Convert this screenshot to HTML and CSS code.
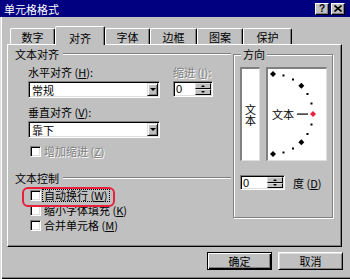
FILE: index.html
```html
<!DOCTYPE html>
<html lang="zh-CN">
<head>
    <meta charset="UTF-8">
    <title>单元格格式</title>
    <link rel="stylesheet" href="styles.css">
</head>
<body>
<div class="window">
    <div class="titlebar">
        <span class="title">单元格格式</span>
        <div class="cap-buttons">
            <span class="cap-btn">?</span>
            <span class="cap-btn">
                <svg width="8" height="7" viewBox="0 0 8 7"><path d="M0.5 0.5 L7.5 6.5 M7.5 0.5 L0.5 6.5" stroke="#000" stroke-width="1.6"/></svg>
            </span>
        </div>
    </div>

    <!-- tab strip -->
    <div class="tabs">
        <div class="tab w45">数字</div>
        <div class="tab tab-active w50">对齐</div>
        <div class="tab w45">字体</div>
        <div class="tab w47">边框</div>
        <div class="tab w46">图案</div>
        <div class="tab w49">保护</div>
    </div>

    <div class="panel">
        <div class="left">
            <div class="group-head"><span>文本对齐</span><i class="rule"></i></div>

            <div class="align-grid">
                <div class="field">
                    <label>水平对齐 (<u>H</u>):</label>
                    <div class="combo"><span class="combo-text">常规</span><span class="drop-btn"><i class="tri-down"></i></span></div>
                </div>
                <div class="field">
                    <label class="disabled">缩进 (<u>I</u>):</label>
                    <div class="spin">
                        <span class="spin-val">0</span>
                        <span class="spin-btns"><span class="spin-btn"><i class="tri-up"></i></span><span class="spin-btn"><i class="tri-down small"></i></span></span>
                    </div>
                </div>
                <div class="field">
                    <label>垂直对齐 (<u>V</u>):</label>
                    <div class="combo"><span class="combo-text">靠下</span><span class="drop-btn"><i class="tri-down"></i></span></div>
                </div>
            </div>

            <div class="check-row first-check">
                <span class="box"></span><span class="check-label disabled">增加缩进 (<u>Z</u>)</span>
            </div>

            <div class="group-head second"><span>文本控制</span><i class="rule"></i></div>

            <div class="checks">
                <div class="check-row marked">
                    <span class="box"></span><span class="check-label focused">自动换行 (<u>W</u>)</span>
                </div>
                <div class="check-row">
                    <span class="box"></span><span class="check-label">缩小字体填充 (<u>K</u>)</span>
                </div>
                <div class="check-row">
                    <span class="box"></span><span class="check-label">合并单元格 (<u>M</u>)</span>
                </div>
            </div>
        </div>

        <fieldset class="orient">
            <legend>方向</legend>
            <div class="wells">
                <div class="well vertical-text">文本</div>
                <div class="well dial">
                    <svg width="58" height="91" viewBox="0 0 58 91">
                        <g fill="#000">
                            <rect x="14.5" y="5.5" width="2" height="2"/>
                            <rect x="24" y="9.5" width="2" height="2"/>
                            <rect x="38.5" y="24" width="2" height="2"/>
                            <rect x="42.5" y="33.5" width="2" height="2"/>
                            <rect x="42.5" y="54.5" width="2" height="2"/>
                            <rect x="38.5" y="64" width="2" height="2"/>
                            <rect x="24" y="78.5" width="2" height="2"/>
                            <rect x="14.5" y="82.5" width="2" height="2"/>
                            <path d="M5 2 L8 5 L5 8 L2 5 Z"/>
                            <path d="M33.3 13.7 L36.3 16.7 L33.3 19.7 L30.3 16.7 Z"/>
                            <path d="M33.3 70.3 L36.3 73.3 L33.3 76.3 L30.3 73.3 Z"/>
                            <path d="M5 82 L8 85 L5 88 L2 85 Z"/>
                            <rect x="29" y="44.5" width="11" height="1.2"/>
                        </g>
                        <path d="M45 42 L48 45 L45 48 L42 45 Z" fill="#e8203c"/>
                        <text x="4" y="49.5" class="dial-text">文本</text>
                    </svg>
                </div>
            </div>
            <div class="degree-row">
                <div class="spin deg">
                    <span class="spin-val">0</span>
                    <span class="spin-btns"><span class="spin-btn"><i class="tri-up"></i></span><span class="spin-btn"><i class="tri-down small"></i></span></span>
                </div>
                <span class="deg-label">度 (<u>D</u>)</span>
            </div>
        </fieldset>
    </div>

    <div class="actions">
        <div class="btn btn-default">确定</div>
        <div class="btn">取消</div>
    </div>
</div>
</body>
</html>
```

FILE: styles.css
```css
* {
    box-sizing: border-box;
}
body {
    margin: 0;
    background: #c0c0c0;
    font-family: "Noto Sans CJK SC", "Liberation Sans", sans-serif;
    font-size: 11px;
    color: #000;
}
.window {
    width: 350px;
    height: 279px;
    background: #c0c0c0;
    overflow: hidden;
    box-shadow: inset 1px 0 #dfdfdf, inset 2px 0 #fff, inset 0 -1px #000, inset 0 -2px #808080;
}

/* title bar */
.titlebar {
    height: 17px;
    background: #000080;
    color: #fff;
    display: flex;
    align-items: center;
    justify-content: space-between;
    padding: 0 5px 0 4px;
}
.title {
    line-height: 12px;
}
.cap-buttons {
    display: flex;
    gap: 2px;
}
.cap-btn {
    width: 14px;
    height: 12px;
    background: #c0c0c0;
    border: 1px solid;
    border-color: #fff #000 #000 #fff;
    box-shadow: inset -1px -1px #808080;
    display: flex;
    align-items: center;
    justify-content: center;
    color: #000;
    font: bold 10px "Liberation Sans", sans-serif;
}

/* tabs */
.tabs {
    display: flex;
    align-items: flex-end;
    height: 18px;
    margin-top: 9px;
    padding-left: 10px;
    position: relative;
    z-index: 1;
}
.tab {
    height: 16px;
    padding-top: 1px;
    line-height: 14px;
    text-align: center;
    border: 1px solid;
    border-bottom: none;
    border-color: #fff #000 transparent #fff;
    border-radius: 2px 2px 0 0;
    box-shadow: inset -1px 0 #808080;
}
.tab-active {
    height: 19px;
    padding-top: 4px;
    margin-bottom: -1px;
    background: #c0c0c0;
}
.w45 { width: 45px; }
.w46 { width: 46px; }
.w47 { width: 47px; }
.w49 { width: 49px; }
.w50 { width: 50px; }

.panel {
    margin-left: 7px;
    width: 335px;
    height: 203px;
    border: 1px solid;
    border-color: #fff #000 #000 #fff;
    box-shadow: inset -1px -1px #808080;
    display: flex;
    align-items: flex-start;
}

/* left side */
.left {
    width: 225px;
    padding-top: 3px;
}
.group-head {
    display: flex;
    align-items: center;
    gap: 4px;
    height: 12px;
    line-height: 12px;
    padding-left: 7px;
    margin-right: 2px;
}
.group-head.second {
    margin-top: 15px;
}
.rule {
    flex: 1;
    height: 2px;
    border-top: 1px solid #808080;
    border-bottom: 1px solid #fff;
}
.align-grid {
    display: grid;
    grid-template-columns: 132px 40px;
    column-gap: 13px;
    row-gap: 8px;
    padding-left: 20px;
    margin-top: 6px;
}
.field label {
    display: block;
    height: 12px;
    line-height: 12px;
    margin-bottom: 3px;
}
.disabled {
    color: #808080;
    text-shadow: 1px 1px #fff;
}
.combo {
    height: 17px;
    background: #fff;
    border: 1px solid;
    border-color: #808080 #fff #fff #808080;
    box-shadow: inset 1px 1px #000, inset -1px -1px #dfdfdf;
    display: flex;
    align-items: center;
    padding: 0 1px 0 3px;
}
.combo-text {
    flex: 1;
    line-height: 12px;
}
.drop-btn {
    width: 11px;
    height: 13px;
    background: #c0c0c0;
    border: 1px solid;
    border-color: #dfdfdf #000 #000 #dfdfdf;
    box-shadow: inset 1px 1px #fff, inset -1px -1px #808080;
    display: flex;
    align-items: center;
    justify-content: center;
}
.tri-down {
    width: 0;
    height: 0;
    border-style: solid;
    border-width: 3px 3px 0;
    border-color: #000 transparent transparent;
}
.tri-down.small {
    border-width: 2px 2px 0;
}
.tri-up {
    width: 0;
    height: 0;
    border-style: solid;
    border-width: 0 2px 2px;
    border-color: transparent transparent #000;
}
.spin {
    height: 16px;
    background: #fff;
    border: 1px solid;
    border-color: #808080 #fff #fff #808080;
    box-shadow: inset 1px 1px #000, inset -1px -1px #dfdfdf;
    display: flex;
    padding: 1px;
}
.spin-val {
    flex: 1;
    line-height: 12px;
    padding-left: 1px;
    font-family: "Liberation Sans", sans-serif;
}
.spin-btns {
    width: 16px;
    display: flex;
    flex-direction: column;
}
.spin-btn {
    flex: 1;
    background: #c0c0c0;
    border: 1px solid;
    border-color: #dfdfdf #000 #000 #dfdfdf;
    display: flex;
    align-items: center;
    justify-content: center;
}
.check-row {
    display: flex;
    align-items: center;
    gap: 1px;
    height: 12px;
    padding-left: 22px;
}
.first-check {
    margin-top: 7px;
}
.box {
    width: 11px;
    height: 11px;
    background: #fff;
    border: 1px solid;
    border-color: #808080 #fff #fff #808080;
    box-shadow: inset 1px 1px #000, inset -1px -1px #dfdfdf;
}
.check-label {
    height: 13px;
    line-height: 11px;
    padding: 0 1px;
    border: 1px solid transparent;
}
.check-label.focused {
    border: 1px dotted #000;
}
.checks {
    margin-top: 5px;
    display: flex;
    flex-direction: column;
    gap: 3px;
}
.marked {
    position: relative;
}
/* red annotation drawn over the first option */
.marked::after {
    content: "";
    position: absolute;
    left: 14px;
    top: -2px;
    width: 89px;
    height: 16px;
    border: 2px solid #e8203c;
    border-radius: 6px;
}

/* orientation box */
.orient {
    margin: 3px 0 0;
    width: 100px;
    height: 170px;
    padding: 7px 5px 0 6px;
    border: 1px solid #808080;
    box-shadow: inset 1px 1px #fff, 1px 1px #fff;
}
.orient legend {
    padding: 0 2px;
    margin-left: 1px;
    line-height: 12px;
    background: #c0c0c0;
}
.wells {
    display: flex;
    gap: 6px;
    height: 94px;
}
.well {
    background: #fff;
    border-style: solid;
    border-width: 2px 1px 1px 2px;
    border-color: #808080 #dfdfdf #dfdfdf #808080;
}
.vertical-text {
    width: 20px;
    display: flex;
    align-items: center;
    justify-content: center;
    writing-mode: vertical-rl;
    line-height: 14px;
}
.dial {
    width: 61px;
}
.dial svg {
    display: block;
}
.dial-text {
    font-family: "Noto Sans CJK SC", sans-serif;
    font-size: 11px;
}
.degree-row {
    display: flex;
    align-items: center;
    margin-top: 14px;
}
.spin.deg {
    width: 45px;
    height: 15px;
}
.deg-label {
    margin-left: 8px;
    line-height: 12px;
}

/* dialog buttons */
.actions {
    display: flex;
    justify-content: flex-end;
    gap: 6px;
    padding: 5px 7px 0 0;
}
.btn {
    width: 65px;
    height: 18px;
    line-height: 16px;
    text-align: center;
    border: 1px solid;
    border-color: #fff #000 #000 #fff;
    box-shadow: inset 1px 1px #dfdfdf, inset -1px -1px #808080;
}
.btn-default {
    border-color: #000;
    box-shadow: inset 1px 1px #fff, inset -1px -1px #000, inset -2px -2px #808080;
}
```
